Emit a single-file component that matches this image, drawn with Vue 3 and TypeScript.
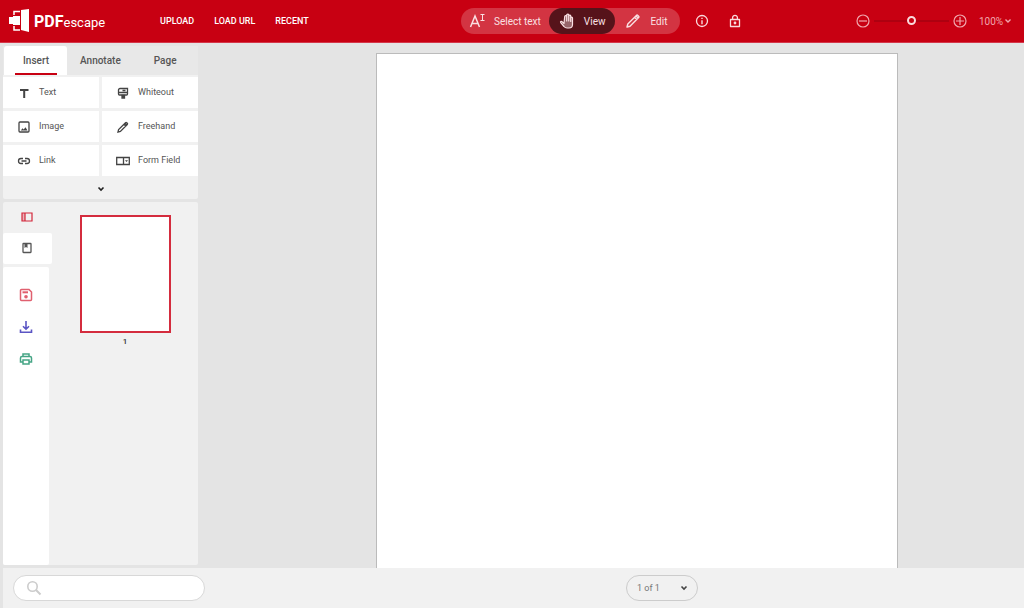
<script setup lang="ts">
import { ref } from 'vue'

const modes = ['Select text', 'View', 'Edit']
const mode = ref('View')
const tabs = ['Insert', 'Annotate', 'Page']
const tab = ref('Insert')
const tools = ['Text', 'Whiteout', 'Image', 'Freehand', 'Link', 'Form Field']
const zoom = ref(50)
const query = ref('')
</script>

<template>
  <div class="app">
    <header class="bar">
      <a href="#" class="logo" aria-label="PDFescape">
        <svg width="22" height="26" viewBox="0 0 22 26" aria-hidden="true">
          <path d="M6 7V3.500h6M6 18v4h6" fill="none" stroke="#fff" stroke-width="1.500" />
          <path d="M13 2l8-1v23l-8-2z" fill="#fff" />
          <path d="M1 9h4V8h7v9H5v-1H1z" fill="#fff" />
        </svg>
        <span class="logo-pdf">PDF</span><span class="logo-rest">escape</span>
      </a>
      <nav class="nav">
        <a href="#">UPLOAD</a>
        <a href="#">LOAD URL</a>
        <a href="#">RECENT</a>
      </nav>
      <div class="modes">
        <button v-for="m in modes" :key="m" type="button" class="mode" :class="{ on: m === mode }" @click="mode = m">
          <svg v-if="m === 'Select text'" width="16" height="16" viewBox="0 0 16 16">
            <path d="M1.500 14L6 3l4.500 11M3 10.500h6" fill="none" stroke="currentColor" stroke-width="1.500" />
            <path d="M11.500 1.500h4M13.500 1.500v6M11.500 7.500h4" fill="none" stroke="currentColor" />
          </svg>
          <svg v-else-if="m === 'View'" width="16" height="16" viewBox="0 0 16 16">
            <path d="M5 10.500L3 8.600c-.8-.6-1.900.1-1.300 1L5 13.500c.8 1 1.600 1.500 3 1.500h2c2 0 3.500-1.500 3.500-3.500V5c0-1.200-1.800-1.200-1.800 0v3.500V3c0-1.200-2-1.200-2 0v5V2c0-1.200-2-1.200-2 0v6V3.500c0-1.200-2-1.200-2 0z" fill="currentColor" fill-opacity=".4" stroke="currentColor" stroke-width="1.200" stroke-linejoin="round" />
          </svg>
          <svg v-else width="16" height="16" viewBox="0 0 16 16">
            <path d="M2 14l.8-3 8.600-8.600c.5-.5.9-.5 1.400 0l.8.8c.5.500.5.900 0 1.400L5 13.200zM9.500 4.200l2.300 2.300M11 3l2 2" fill="none" stroke="currentColor" stroke-width="1.400" stroke-linejoin="round" />
          </svg>
          <span>{{ m }}</span>
        </button>
      </div>
      <div class="extras">
        <button type="button" aria-label="Information">
          <svg width="14" height="14" viewBox="0 0 14 14" fill="none" stroke="currentColor">
            <circle cx="7" cy="7" r="5.500" stroke-width="1.300" />
            <path d="M7 6.200v4M7 3.800v1.300" stroke-width="1.400" />
          </svg>
        </button>
        <button type="button" aria-label="Security">
          <svg width="14" height="14" viewBox="0 0 14 14" fill="none" stroke="currentColor" stroke-width="1.300">
            <path d="M2.500 5.500h9v7h-9zM4.600 5.500V3.600c0-3 4.800-3 4.800 0v1.900" stroke-linejoin="round" />
            <circle cx="7" cy="9" r="1.400" fill="currentColor" stroke="none" />
          </svg>
        </button>
      </div>
      <div class="zoom">
        <button type="button" aria-label="Zoom out">
          <svg width="14" height="14" viewBox="0 0 14 14" fill="none" stroke="currentColor" stroke-width="1.200">
            <circle cx="7" cy="7" r="6" /><path d="M3 7h8" />
          </svg>
        </button>
        <input v-model="zoom" type="range" min="0" max="100" aria-label="Zoom" />
        <button type="button" aria-label="Zoom in">
          <svg width="14" height="14" viewBox="0 0 14 14" fill="none" stroke="currentColor" stroke-width="1.200">
            <circle cx="7" cy="7" r="6" /><path d="M3 7h8M7 3v8" />
          </svg>
        </button>
        <label class="pick">
          <select aria-label="Zoom level"><option>100%</option></select>
          <svg width="8" height="6" viewBox="0 0 8 6"><path d="M1.500 1.500L4 4l2.500-2.500" fill="none" stroke="currentColor" stroke-width="1.400" /></svg>
        </label>
      </div>
    </header>

    <div class="work">
      <aside class="side">
        <section class="tools">
          <div class="tabs" role="tablist">
            <button v-for="t in tabs" :key="t" type="button" role="tab" :aria-selected="t === tab" :class="{ on: t === tab }" @click="tab = t">
              <span>{{ t }}</span>
            </button>
          </div>
          <div class="cells">
            <button v-for="t in tools" :key="t" type="button">
              <svg width="14" height="14" viewBox="0 0 14 14" fill="none" stroke="currentColor" stroke-width="1.300">
                <path v-if="t === 'Text'" d="M3 4h8.500M7.200 4v8" stroke-width="2" />
                <template v-else-if="t === 'Whiteout'">
                  <path d="M4 2.500h7.500V8a1 1 0 0 1-1 1h-7a1 1 0 0 1-1-1V4A1.500 1.500 0 0 1 4 2.500zM2.500 6.500h9M6.500 4.500h3" />
                  <path d="M6 9.500h2.500v2.500H6z" fill="currentColor" />
                </template>
                <template v-else-if="t === 'Image'">
                  <rect x="2" y="2" width="10" height="10" rx="1" />
                  <path d="M3.800 10.500l1.700-2.300 1.200 1.400 1.800-2.300 2 3.200z" fill="currentColor" stroke="none" />
                </template>
                <path v-else-if="t === 'Freehand'" d="M2 12l.6-2.400 6.900-6.900c.4-.4.8-.4 1.200 0l.6.6c.4.400.4.800 0 1.200l-6.900 6.900zM8 4.200l1.800 1.800M9 3.200l1.800 1.800" />
                <path v-else-if="t === 'Link'" d="M6 4.500H4a2.500 2.500 0 0 0 0 5h2M8 4.500h2a2.500 2.500 0 0 1 0 5H8M4.500 7h5" />
                <template v-else>
                  <path d="M.7 3.500h12.600v7H.7zM7.500 3.500v7" />
                  <path d="M9 6.200h3L10.500 8z" fill="currentColor" stroke="none" />
                </template>
              </svg>
              <span>{{ t }}</span>
            </button>
          </div>
          <button type="button" class="more" aria-label="More tools">
            <svg width="8" height="6" viewBox="0 0 8 6"><path d="M1.500 1.500L4 4l2.500-2.500" fill="none" stroke="currentColor" stroke-width="1.600" /></svg>
          </button>
        </section>

        <section class="pages">
          <div class="rail">
            <button type="button" class="view red" aria-label="Page thumbnails">
              <svg width="12" height="12" viewBox="0 0 12 12" fill="none" stroke="currentColor">
                <path d="M1 2h10v8H1zM4 2v8" stroke-width="1.200" /><path d="M1 2h3v8H1z" fill="currentColor" fill-opacity=".3" stroke="none" />
              </svg>
            </button>
            <button type="button" class="view white" aria-label="Bookmarks">
              <svg width="12" height="12" viewBox="0 0 12 12" fill="none" stroke="currentColor">
                <rect x="2" y="1.500" width="8" height="9" rx=".5" stroke-width="1.300" />
                <path d="M3.500 2h3v4L5 5 3.500 6z" fill="currentColor" stroke="none" />
              </svg>
            </button>
            <div class="actions">
              <button type="button" class="save" aria-label="Save">
                <svg width="14" height="14" viewBox="0 0 14 14" fill="none" stroke="currentColor" stroke-width="1.500">
                  <path d="M1.500 2.500a1 1 0 0 1 1-1h7.500l2.500 2.500v7.500a1 1 0 0 1-1 1h-9a1 1 0 0 1-1-1z" />
                  <path d="M3.500 4.300h5.500" stroke-width="2" /><circle cx="7" cy="8.800" r="1.800" fill="currentColor" stroke="none" />
                </svg>
              </button>
              <button type="button" class="down" aria-label="Download">
                <svg width="14" height="14" viewBox="0 0 14 14" fill="none" stroke="currentColor" stroke-width="1.600">
                  <path d="M7 1v8M4 6.200l3 3 3-3M1.500 9.500v2.800h11V9.500" />
                </svg>
              </button>
              <button type="button" class="print" aria-label="Print">
                <svg width="14" height="14" viewBox="0 0 14 14" fill="none" stroke="currentColor" stroke-width="1.500">
                  <path d="M4 4.500v-2.500h6v2.500M4 10H1.500V6c0-1 .5-1.500 1.500-1.500h8c1 0 1.500.5 1.500 1.500v4H10M4 8h6v4H4z" />
                </svg>
              </button>
            </div>
          </div>
          <div class="thumbs">
            <button type="button" class="thumb"><span class="sheet"></span><span>1</span></button>
          </div>
        </section>
      </aside>
      <main class="canvas"><div class="page"></div></main>
    </div>

    <footer class="foot">
      <label class="search">
        <svg width="16" height="16" viewBox="0 0 16 16" fill="none" stroke="#ccc"><circle cx="6.500" cy="6.500" r="4.700" stroke-width="1.600" /><path d="M10 10l4.500 4.500" stroke-width="2" /></svg>
        <input v-model="query" type="text" aria-label="Search" />
      </label>
      <div class="center">
        <label class="pick pager">
          <select aria-label="Page"><option>1 of 1</option></select>
          <svg width="8" height="6" viewBox="0 0 8 6"><path d="M1.500 1.500L4 4l2.500-2.500" fill="none" stroke="#444" stroke-width="1.600" /></svg>
        </label>
      </div>
    </footer>
  </div>
</template>

<style>
body { background: #e4e4e4; }
</style>

<style scoped>
* { box-sizing: border-box; }
.app {
  height: 100vh;
  display: flex;
  flex-direction: column;
  font-family: Roboto, "Liberation Sans", sans-serif;
  font-size: 9px;
  color: #555;
}
button, select, input { font: inherit; color: inherit; border: 0; background: none; padding: 0; margin: 0; }
button { cursor: pointer; display: flex; align-items: center; }
svg { display: block; flex: none; }
a { color: inherit; text-decoration: none; }

.bar {
  flex: none;
  display: flex;
  align-items: center;
  height: 43px;
  background: #c80012;
  border-bottom: 1px solid #d4374a;
  color: #fff;
}
.logo { display: flex; align-items: center; width: 152px; padding-left: 8px; }
.logo-pdf { margin-left: 4px; font-size: 16px; font-weight: 700; }
.logo-rest { font-size: 13px; padding-top: 2px; }
.nav { flex: 15 1 0; display: flex; gap: 20px; padding-left: 8px; font-weight: 500; white-space: nowrap; }
.modes { flex: none; display: flex; height: 26px; border-radius: 13px; background: #d33442; font-size: 10px; color: #fae0e3; }
.mode { gap: 9px; padding: 0 10px; border-radius: 13px; }
.mode:first-child { padding: 0 8px; }
.mode:last-child { padding-right: 13px; }
.mode.on { background: #56131a; }
.extras { flex: 8 1 0; display: flex; gap: 19px; padding-left: 15px; color: #fadadd; }
.zoom { flex: none; display: flex; align-items: center; gap: 4px; padding-right: 12px; font-size: 10px; color: #f0a6ad; }
.zoom input { appearance: none; width: 75px; height: 14px; }
.zoom input::-webkit-slider-runnable-track { height: 2px; background: #ae0010; }
.zoom input::-webkit-slider-thumb { appearance: none; width: 9px; height: 9px; margin-top: -4px; border: 2px solid #fadadd; border-radius: 50%; background: #c80012; }
.pick { display: flex; align-items: center; }
.pick select { appearance: none; outline: 0; }
.zoom .pick { margin-left: 8px; }

.work { flex: 1; min-height: 0; display: flex; }
.side { width: 198px; flex: none; display: flex; flex-direction: column; gap: 3px; padding: 3px 0 3px 3px; }
.tools, .pages { background: #f1f1f1; border-radius: 2px; }
.tabs { display: flex; height: 29px; background: #e8e8e8; font-size: 10px; font-weight: 500; }
.tabs button { padding: 0 13px; border-radius: 3px 3px 0 0; }
.tabs button:first-child { padding: 0 10px 0 11px; margin-left: 1px; }
.tabs button:last-child { padding: 0 20px; }
.tabs span { height: 29px; line-height: 29px; }
.tabs .on { background: #fff; }
.tabs .on span { padding: 0 8px; border-bottom: 2px solid #c80012; }
.cells { display: grid; grid-template-columns: 1fr 1fr; gap: 3px; padding-top: 2px; }
.cells button { height: 31px; gap: 8px; padding: 0 0 2px 14px; background: #fff; }
.cells svg { margin-top: 2px; color: #444; }
.more { width: 100%; height: 23px; padding-top: 2px; justify-content: center; color: #222; }
.pages { flex: 1; min-height: 0; display: flex; }
.rail { width: 49px; display: flex; flex-direction: column; }
.view { width: 100%; height: 31px; justify-content: center; border-radius: 2px; padding: 0 1px 1px 0; }
.red { color: #d3263a; }
.white { background: #fff; color: #555; }
.actions { flex: 1; width: 46px; margin-top: 3px; padding-top: 21px; display: flex; flex-direction: column; align-items: center; gap: 18px; background: #fff; border-radius: 2px; }
.save { color: #e0606f; }
.down { color: #5b55c4; }
.print { color: #45a585; }
.thumbs { flex: 1; display: flex; justify-content: center; align-items: flex-start; padding-top: 13px; }
.thumb { flex-direction: column; gap: 4px; font-size: 8px; font-weight: 500; color: #333; }
.sheet { width: 91px; height: 118px; background: #fff; border: 2px solid #d42c3e; }
.canvas { flex: 1; min-width: 0; overflow: hidden; padding: 10px 0 0 52px; display: flex; justify-content: center; }
.page { width: 522px; min-height: 676px; background: #fff; border: 1px solid #bbb; }

.foot { flex: none; display: flex; align-items: center; height: 40px; margin-left: 3px; padding-left: 10px; background: #f1f1f1; color: #777; }
.search { display: flex; align-items: center; gap: 8px; width: 192px; height: 26px; padding: 0 12px; background: #fff; border: 1px solid #d8d8d8; border-radius: 13px; }
.search input { flex: 1; min-width: 0; outline: 0; }
.center { flex: 1; display: flex; justify-content: center; padding-left: 95px; }
.pager { width: 72px; height: 26px; justify-content: space-between; padding: 0 9px 0 10px; border: 1px solid #ccc; border-radius: 13px; }
</style>
